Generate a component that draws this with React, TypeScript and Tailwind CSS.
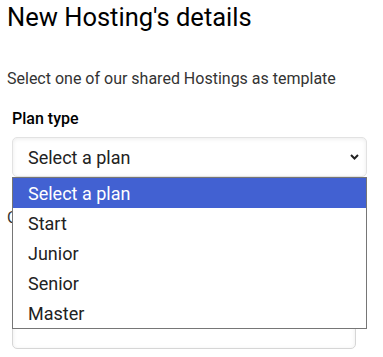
const plans = ['Select a plan', 'Start', 'Junior', 'Senior', 'Master']

function Chevron() {
  return (
    <svg width="9" height="6" viewBox="0 0 9 6" className="text-[#222]">
      <path d="M1 1l3.5 3.5L8 1" fill="none" stroke="currentColor" strokeWidth="2" />
    </svg>
  )
}

export default function App() {
  return (
    <div className="w-[383px] h-[357px] overflow-hidden bg-white font-['Roboto',sans-serif] text-[#212529] px-[7px]">
      <h1 className="mt-[2px] text-[25.5px] leading-[30px] text-black">New Hosting's details</h1>

      <p className="mt-[37px] text-[16px] leading-[19px] text-[#333]">
        Select one of our shared Hostings as template
      </p>

      <div className="mt-[21px] pl-[5px]">
        <label className="block text-[16px] leading-[19px] font-medium text-black">Plan type</label>

        <div className="relative mt-[9px] w-[355px]">
          <div className="h-[40px] flex items-center justify-between pl-[15px] pr-[7px] rounded-[5px] border border-[#e2e2e2] bg-white shadow-[inset_0_1px_4px_rgba(0,0,0,0.08)] text-[18px] text-[#222]">
            <span>Select a plan</span>
            <Chevron />
          </div>

          <ul className="absolute left-0 top-[40px] z-10 w-[355px] border border-[#767676] bg-white text-[18px] text-[#222]">
            {plans.map((p, i) => (
              <li
                key={p}
                className={
                  i === 0
                    ? 'h-[30px] flex items-center pl-[15px] bg-[#4261d2] text-white'
                    : 'h-[30px] flex items-center pl-[15px]'
                }
              >
                {p}
              </li>
            ))}
          </ul>
        </div>
      </div>

      <p className="mt-[31px] text-[16px] leading-[19px] text-[#333]">Or set your own values</p>

      <div className="mt-[12px] ml-[5px] w-[344px] h-[110px] rounded-[5px] border border-[#d6d6d6] shadow-[inset_0_1px_4px_rgba(0,0,0,0.08)]" />
    </div>
  )
}
